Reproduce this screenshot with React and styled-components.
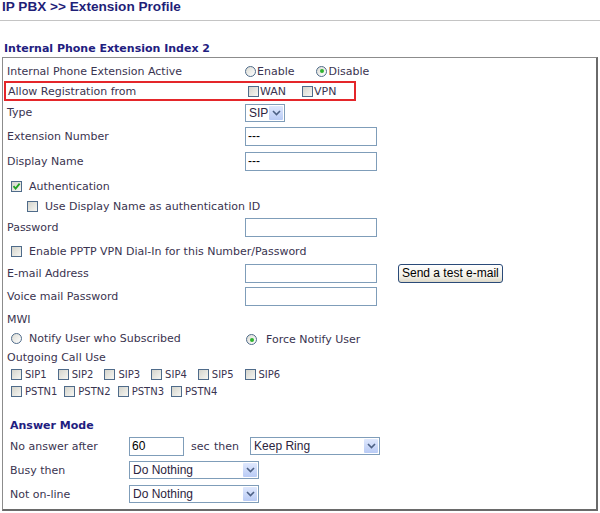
import React from 'react';
import styled, { createGlobalStyle } from 'styled-components';

const GlobalStyle = createGlobalStyle`
  html, body {
    margin: 0;
    padding: 0;
    background: #ffffff;
  }
  body {
    font-family: "DejaVu Sans", Verdana, sans-serif;
    font-size: 11px;
    color: #3a3450;
  }
`;

const CheckMark = () => (
  <svg width="9" height="9" viewBox="0 0 9 9">
    <path d="M1.5 4.2 L3.6 6.6 L7.6 1.6" fill="none" stroke="#21a121" strokeWidth="1.8" />
  </svg>
);

const Arrow = () => (
  <svg width="9" height="6" viewBox="0 0 9 6">
    <path d="M1 1 L4.5 4.5 L8 1" fill="none" stroke="#4d6185" strokeWidth="1.6" />
  </svg>
);

const Checkbox = ({ checked }) => <CheckBox>{checked && <CheckMark />}</CheckBox>;

const Radio = ({ checked }) => <RadioBox>{checked && <Dot />}</RadioBox>;

const Select = ({ width, value }) => (
  <SelectBox $w={width}>
    <SelectText>{value}</SelectText>
    <ArrowBtn>
      <Arrow />
    </ArrowBtn>
  </SelectBox>
);

const ExtensionProfile = () => {
  const sips = ['SIP1', 'SIP2', 'SIP3', 'SIP4', 'SIP5', 'SIP6'];
  const pstns = ['PSTN1', 'PSTN2', 'PSTN3', 'PSTN4'];

  return (
    <Page>
      <GlobalStyle />
      <PageTitle>IP PBX &gt;&gt; Extension Profile</PageTitle>
      <Rule />
      <SectionTitle>Internal Phone Extension Index 2</SectionTitle>

      <Panel>
        <Row $h={20}>
          <Label>Internal Phone Extension Active</Label>
          <Field>
            <Option $gap={22}>
              <Radio />Enable
            </Option>
            <Option>
              <Radio checked />Disable
            </Option>
          </Field>
        </Row>

        <MarkedRow>
          <Label $w={240}>Allow Registration from</Label>
          <Field>
            <Option $gap={16}>
              <Checkbox />WAN
            </Option>
            <Option>
              <Checkbox />VPN
            </Option>
          </Field>
        </MarkedRow>

        <Row $h={23}>
          <Label>Type</Label>
          <Field>
            <Select width={40} value="SIP" />
          </Field>
        </Row>

        <Row $h={24}>
          <Label>Extension Number</Label>
          <Field>
            <TextInput $w={132} defaultValue="---" />
          </Field>
        </Row>

        <Row $h={26}>
          <Label>Display Name</Label>
          <Field>
            <TextInput $w={132} defaultValue="---" />
          </Field>
        </Row>

        <Row $h={24} $indent={8}>
          <Option>
            <Checkbox checked />
            <Spaced>Authentication</Spaced>
          </Option>
        </Row>

        <Row $h={16} $indent={24}>
          <Option>
            <Checkbox />
            <Spaced>Use Display Name as authentication ID</Spaced>
          </Option>
        </Row>

        <Row $h={26}>
          <Label>Password</Label>
          <Field>
            <TextInput $w={132} type="text" />
          </Field>
        </Row>

        <Row $h={22} $indent={8}>
          <Option>
            <Checkbox />
            <Spaced>Enable PPTP VPN Dial-In for this Number/Password</Spaced>
          </Option>
        </Row>

        <Row $h={22}>
          <Label>E-mail Address</Label>
          <Field>
            <TextInput $w={132} type="text" />
            <TestButton>Send a test e-mail</TestButton>
          </Field>
        </Row>

        <Row $h={25}>
          <Label>Voice mail Password</Label>
          <Field>
            <TextInput $w={132} type="text" />
          </Field>
        </Row>

        <Row $h={21}>
          <Label>MWI</Label>
        </Row>

        <Row $h={19} $indent={8}>
          <Label $w={235}>
            <Option>
              <Radio />
              <Spaced>Notify User who Subscribed</Spaced>
            </Option>
          </Label>
          <Option>
            <Radio checked />
            <Spaced $w={8}>Force Notify User</Spaced>
          </Option>
        </Row>

        <Row $h={17}>
          <Label>Outgoing Call Use</Label>
        </Row>

        <Row $h={17} $indent={8}>
          <BoxList $gap={11}>
            {sips.map((s) => (
              <Option key={s}>
                <Checkbox />
                <Small>{s}</Small>
              </Option>
            ))}
          </BoxList>
        </Row>

        <Row $h={16} $indent={8}>
          <BoxList $gap={7}>
            {pstns.map((s) => (
              <Option key={s}>
                <Checkbox />
                <Small>{s}</Small>
              </Option>
            ))}
          </BoxList>
        </Row>

        <AnswerMode>
          <AnswerTitle>Answer Mode</AnswerTitle>
          <AnswerRow>
            <AnswerLabel>No answer after</AnswerLabel>
            <TextInput $w={55} defaultValue="60" />
            <Unit>sec then</Unit>
            <Select width={130} value="Keep Ring" />
          </AnswerRow>
          <AnswerRow>
            <AnswerLabel>Busy then</AnswerLabel>
            <Select width={130} value="Do Nothing" />
          </AnswerRow>
          <AnswerRow>
            <AnswerLabel>Not on-line</AnswerLabel>
            <Select width={130} value="Do Nothing" />
          </AnswerRow>
        </AnswerMode>
      </Panel>
    </Page>
  );
};

const Page = styled.div`
  width: 600px;
  height: 513px;
  overflow: hidden;
`;

const PageTitle = styled.h1`
  margin: 0 0 0 2px;
  font-family: "Liberation Sans", Arial, sans-serif;
  font-size: 13.6px;
  line-height: 14px;
  font-weight: bold;
  color: #1f1f78;
`;

const Rule = styled.div`
  height: 1px;
  background: #c4c4c4;
  margin-top: 6px;
`;

const SectionTitle = styled.h2`
  margin: 21px 0 0 4px;
  font-family: "DejaVu Sans", Verdana, sans-serif;
  font-size: 11px;
  line-height: 14px;
  font-weight: bold;
  color: #1f2080;
`;

const Panel = styled.div`
  margin: 1px 0 0 2px;
  width: 596px;
  box-sizing: border-box;
  border-top: 1px solid #8c8c8c;
  border-left: 1px solid #8c8c8c;
  border-right: 2px solid #6a6a6a;
  border-bottom: 2px solid #6a6a6a;
  padding: 3px 0 4px 0;
`;

const Row = styled.div`
  display: flex;
  align-items: center;
  height: ${(p) => p.$h}px;
  padding-left: ${(p) => p.$indent || 4}px;
`;

const MarkedRow = styled.div`
  display: flex;
  align-items: center;
  width: 352px;
  height: 20px;
  box-sizing: border-box;
  margin-left: 1px;
  padding-left: 2px;
  border: 2px solid #e4262a;
`;

const Label = styled.div`
  width: ${(p) => p.$w || 238}px;
  flex-shrink: 0;
  white-space: nowrap;
`;

const Field = styled.div`
  display: flex;
  align-items: center;
`;

const Option = styled.label`
  display: inline-flex;
  align-items: center;
  white-space: nowrap;
  margin-right: ${(p) => p.$gap || 0}px;
`;

const Spaced = styled.span`
  margin-left: ${(p) => p.$w || 6}px;
`;

const Small = styled.span`
  margin-left: 2px;
  font-size: 10px;
`;

const BoxList = styled.div`
  display: flex;
  align-items: center;
  gap: ${(p) => p.$gap}px;
`;

const CheckBox = styled.span`
  display: inline-flex;
  align-items: center;
  justify-content: center;
  width: 11px;
  height: 11px;
  margin-right: 1px;
  box-sizing: border-box;
  border: 1px solid #4f6b8a;
  background: linear-gradient(135deg, #d4d4cc 0%, #f6f6f2 100%);
`;

const RadioBox = styled.span`
  display: inline-flex;
  align-items: center;
  justify-content: center;
  width: 11px;
  height: 11px;
  margin-right: 1px;
  box-sizing: border-box;
  border: 1px solid #4f6b8a;
  border-radius: 50%;
  background: linear-gradient(135deg, #dcdcd4 0%, #ffffff 100%);
`;

const Dot = styled.span`
  width: 4px;
  height: 4px;
  border-radius: 50%;
  background: #2fb32f;
`;

const TextInput = styled.input`
  width: ${(p) => p.$w}px;
  height: 19px;
  box-sizing: border-box;
  margin: 0;
  padding: 0 2px;
  border: 1px solid #7f9db9;
  font-family: "Liberation Sans", Arial, sans-serif;
  font-size: 12px;
  color: #000;
  outline: none;
`;

const SelectBox = styled.span`
  display: inline-flex;
  align-items: center;
  justify-content: space-between;
  width: ${(p) => p.$w}px;
  height: 18px;
  box-sizing: border-box;
  border: 1px solid #7f9db9;
  padding: 0 1px 0 3px;
  background: #ffffff;
  font-family: "Liberation Sans", Arial, sans-serif;
  font-size: 12px;
  color: #2c2440;
`;

const SelectText = styled.span`
  white-space: nowrap;
`;

const ArrowBtn = styled.span`
  display: inline-flex;
  align-items: center;
  justify-content: center;
  width: 14px;
  height: 14px;
  border-radius: 1px;
  background: linear-gradient(180deg, #dfe8fd 0%, #b9cbf5 100%);
`;

const TestButton = styled.button`
  margin: 0 0 0 21px;
  height: 19px;
  padding: 0 3px;
  border: 1px solid #2a4a78;
  border-radius: 3px;
  background: linear-gradient(180deg, #ffffff 0%, #f1efe6 70%, #dcd8c8 100%);
  font-family: "Liberation Sans", Arial, sans-serif;
  font-size: 12px;
  color: #000;
`;

const AnswerMode = styled.div`
  display: grid;
  grid-template-rows: 16px repeat(3, 22px);
  row-gap: 2px;
  margin-top: 18px;
  padding-left: 7px;
`;

const AnswerTitle = styled.div`
  display: flex;
  align-items: center;
  font-weight: bold;
  color: #1f2080;
`;

const AnswerRow = styled.div`
  display: flex;
  align-items: center;
`;

const AnswerLabel = styled.div`
  width: 119px;
  white-space: nowrap;
`;

const Unit = styled.span`
  margin: 0 11px 0 7px;
  word-spacing: 1px;
`;

export default function App() {
  return <ExtensionProfile />;
}
